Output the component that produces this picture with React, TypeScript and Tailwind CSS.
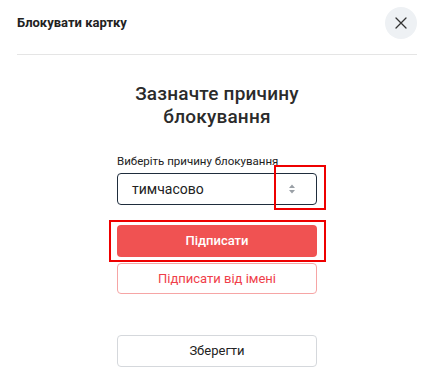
import React from "react";

export default function App() {
  return (
    <div className="w-[428px] h-[384px] bg-white relative overflow-hidden" style={{ fontFamily: 'Roboto, "Noto Sans", sans-serif' }}>
      <div className="flex items-center justify-between pl-[17px] pr-[11px] pt-[6px] h-[39px]">
        <div className="text-[13px] font-bold text-[#222]">Блокувати картку</div>
        <button className="w-[32px] h-[32px] rounded-full bg-[#eef1f4] flex items-center justify-center">
          <svg width="14" height="14" viewBox="0 0 14 14" fill="none" stroke="#333" strokeWidth="1.3" strokeLinecap="round">
            <path d="M2 2 L12 12 M12 2 L2 12" />
          </svg>
        </button>
      </div>
      <div className="ml-[17px] w-[400px] mt-[15px] h-px bg-[#e5e5e5]" />
      <div className="ml-[17px] w-[400px] flex flex-col items-center">
        <h2 className="mt-[27px] text-[19px] leading-[23px] font-medium text-[#2b2b2b] text-center tracking-[0.2px]">
          Зазначте причину<br />блокування
        </h2>
        <div className="w-[200px] mt-[26px]">
          <div className="text-[11.5px] leading-[14px] text-[#222]">Виберіть причину блокування</div>
          <div className="relative mt-[5px] h-[32px] border border-[#1f2d3d] rounded-[4px] flex items-center pl-[14px] pr-[20px] justify-between">
            <span className="text-[14px] text-[#222]">тимчасово</span>
            <svg width="8" height="12" viewBox="0 0 8 12" fill="#9aa0a6">
              <path d="M4 1.5 L7 5 H1 Z M4 10.5 L1 7 H7 Z" />
            </svg>
            <div className="absolute left-[156px] top-[-9px] w-[52px] h-[45px] border-2 border-[#e00]" />
          </div>
          <div className="relative mt-[20px]">
            <button className="w-full h-[32px] rounded-[4px] bg-[#f05252] text-white text-[13px] font-medium">Підписати</button>
            <div className="absolute left-[-8px] top-[-5px] w-[217px] h-[42px] border-2 border-[#e00]" />
          </div>
          <button className="mt-[6px] w-full h-[31px] rounded-[4px] border border-[#f6a5a5] text-[#f03e4a] text-[13px]">Підписати від імені</button>
          <button className="mt-[41px] w-full h-[32px] rounded-[4px] border border-[#d5d8dc] text-[#222] text-[13px]">Зберегти</button>
        </div>
      </div>
    </div>
  );
}
